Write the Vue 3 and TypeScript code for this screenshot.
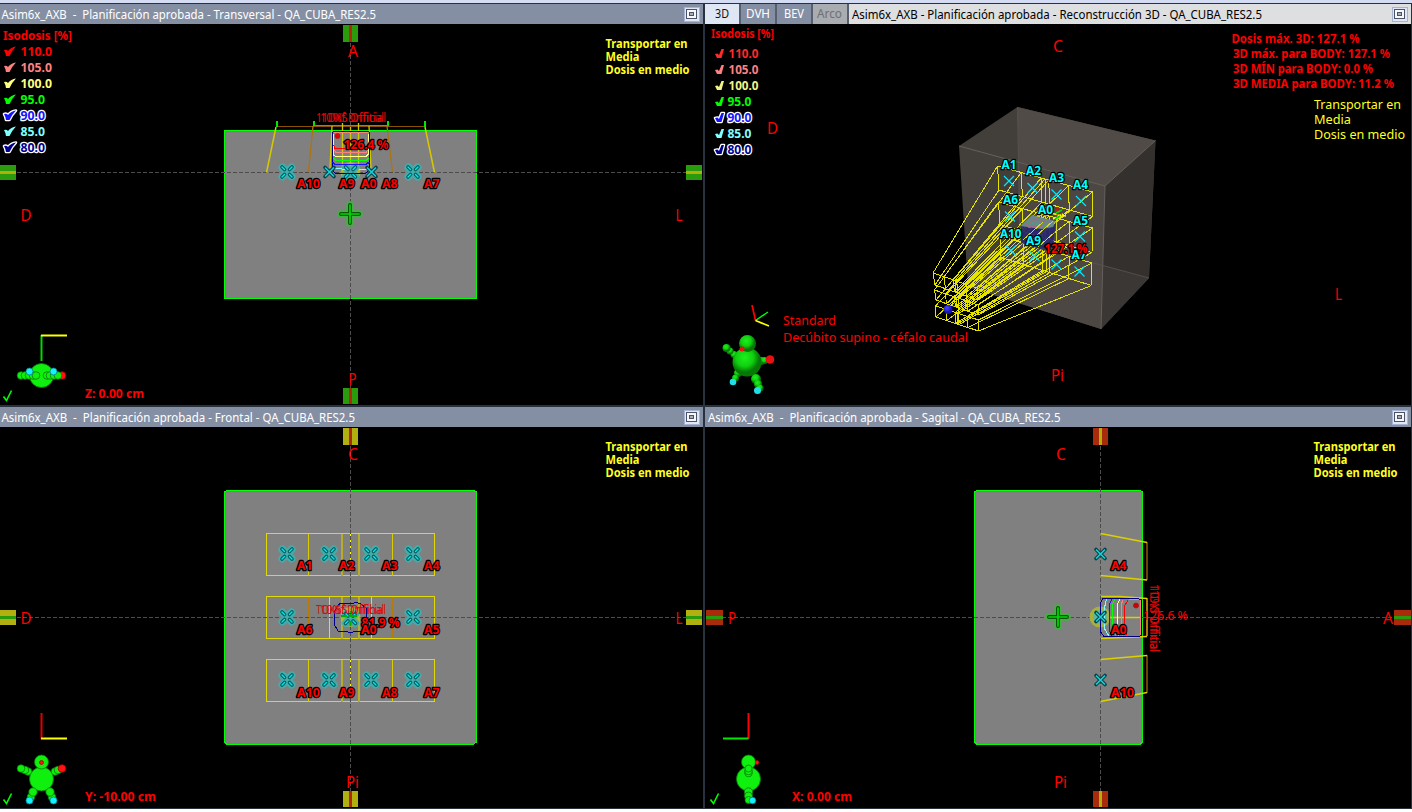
<script setup lang="ts">
interface Label {
  t: string
  x: number
  y: number
  w: number
  s?: number
  c?: string
  kind?: 'bold' | 'plain' | 'outlined' | 'halo'
}
type Pt = [number, number]

const RED = '#ff0000'
const YELLOW = '#ffff20'

const isoLevels = [
  { v: '110.0', c: '#ff0000', c3: '#ff2a2a', halo: false },
  { v: '105.0', c: '#ff8080', c3: '#ff8080', halo: false },
  { v: '100.0', c: '#ffff80', c3: '#f4f484', halo: false },
  { v: '95.0', c: '#00ff00', c3: '#00ff00', halo: false },
  { v: '90.0', c: '#1414ff', c3: '#1414ff', halo: true },
  { v: '85.0', c: '#80ffff', c3: '#80ffff', halo: false },
  { v: '80.0', c: '#000090', c3: '#000090', halo: true },
]

const transport = (x: number, y: number): Label[] => [
  { t: 'Transportar en', x, y, w: 82, c: YELLOW, s: 11.5 },
  { t: 'Media', x, y: y + 13, w: 34, c: YELLOW, s: 11.5 },
  { t: 'Dosis en medio', x, y: y + 26, w: 84, c: YELLOW, s: 11.5 },
]
const axis = (t: string, x: number, y: number, w = 10): Label => ({ t, x, y, w, s: 16, kind: 'plain' })
const field = (t: string, x: number, y: number): Label => ({
  t, x, y, w: t.length > 2 ? 23 : 15.5, s: 12.5, kind: 'outlined',
})

const transversal: Label[] = [
  { t: 'Isodosis [%]', x: 3, y: 40, w: 69, s: 12 },
  ...transport(605.5, 48),
  axis('A', 348, 57), axis('P', 348.5, 385, 8), axis('D', 20.5, 221, 11), axis('L', 675.5, 221, 7),
  { t: 'Z: 0.00 cm', x: 85, y: 398, w: 59, s: 12.5 },
  { t: '126.4 %', x: 343.5, y: 149, w: 45, s: 12, kind: 'outlined' },
  field('A10', 297, 188), field('A9', 339, 188), field('A0', 361, 188), field('A8', 382, 188), field('A7', 424, 188),
]
const frontal: Label[] = [
  ...transport(605.5, 451),
  axis('C', 348, 460), axis('Pi', 346, 788, 13), axis('D', 20.5, 624, 11), axis('L', 675.5, 624, 7),
  { t: 'Y: -10.00 cm', x: 85, y: 801, w: 71, s: 12.5 },
  field('A1', 297, 570), field('A2', 339, 570), field('A3', 382, 570), field('A4', 424, 570),
  field('A6', 297, 634), field('A5', 424, 634),
  { t: '81.9 %', x: 361.5, y: 627, w: 38, s: 12, kind: 'outlined' },
  field('A0', 361, 634),
  field('A10', 297, 697), field('A9', 339, 697), field('A8', 382, 697), field('A7', 424, 697),
]
const sagital: Label[] = [
  ...transport(1313.5, 451),
  axis('C', 1056, 460), axis('Pi', 1054, 788, 13), axis('P', 728, 624, 8), axis('A', 1383, 624),
  { t: 'X: 0.00 cm', x: 792, y: 801, w: 60, s: 12.5 },
  field('A4', 1111, 570), field('A0', 1111, 634), field('A10', 1111, 697),
]
const view3d: Label[] = [
  { t: 'Isodosis [%]', x: 711, y: 38, w: 63, s: 12 },
  axis('C', 1053, 52), axis('D', 767, 134, 11), axis('L', 1335, 300, 7), axis('Pi', 1051, 381, 13),
  { t: 'Dosis máx. 3D: 127.1 %', x: 1231.5, y: 43, w: 128, s: 12 },
  { t: '3D máx. para BODY: 127.1 %', x: 1233, y: 58, w: 157, s: 12 },
  { t: '3D MÍN para BODY: 0.0 %', x: 1233, y: 73, w: 140, s: 12 },
  { t: '3D MEDIA para BODY: 11.2 %', x: 1233, y: 88, w: 161, s: 12 },
  { t: 'Transportar en', x: 1314, y: 109, w: 87, s: 13, c: YELLOW, kind: 'plain' },
  { t: 'Media', x: 1314, y: 124, w: 37, s: 13, c: YELLOW, kind: 'plain' },
  { t: 'Dosis en medio', x: 1314, y: 139, w: 91, s: 13, c: YELLOW, kind: 'plain' },
  { t: 'Standard', x: 783, y: 325, w: 53, s: 13, kind: 'plain' },
  { t: 'Decúbito supino - céfalo caudal', x: 783, y: 342, w: 185, s: 13, kind: 'plain' },
]
const fields3d: Label[] = (
  [['A1', 1001.5, 169], ['A2', 1026, 175], ['A3', 1049, 182], ['A4', 1073, 189], ['A6', 1003, 204],
   ['A0', 1038, 214], ['A5', 1073, 225], ['A10', 1000, 238], ['A9', 1026, 245], ['A7', 1071.5, 259]] as [string, number, number][]
).map(([t, x, y]) => ({ t, x, y, w: t.length > 2 ? 21.5 : 15, s: 12.5, c: '#00ffff', kind: 'outlined' }))

const crosses3d: Pt[] = [
  [1009, 181], [1032.5, 188], [1056.5, 194.5], [1081, 201], [1010, 216.5], [1080, 236.5],
  [1011, 250.5], [1034.5, 256], [1056.5, 264.5], [1079.5, 271.5],
]

/* Each row of fields: corners at the phantom plane, then at the source plane (tl, tr, br, bl). */
const beamRows: { near: Pt[]; far: Pt[] }[] = [
  { near: [[997.5, 166], [1092.5, 192], [1092.5, 216.5], [999, 190]], far: [[933, 273], [977, 288], [977, 300], [935, 285]] },
  { near: [[998.5, 202], [1092.5, 228], [1092, 252.5], [1000, 224.5]], far: [[934.5, 290], [978, 305], [978, 315], [936, 300]] },
  { near: [[1000.5, 236], [1092, 263], [1091.5, 285.5], [1001, 257.5]], far: [[935.5, 306], [978.5, 320], [978.5, 331], [936, 317]] },
]
const stops = [0, 0.25, 0.46, 0.5, 0.54, 0.75, 1]
const mix = (a: Pt, b: Pt, k: number): Pt => [a[0] + (b[0] - a[0]) * k, a[1] + (b[1] - a[1]) * k]
const seg = (a: Pt, b: Pt) => `M${a[0]} ${a[1]}L${b[0]} ${b[1]}`
const beamPath = beamRows
  .map(({ near, far }) =>
    [near, far]
      .map((q) => seg(q[0], q[1]) + seg(q[3], q[2]) + stops.map((k) => seg(mix(q[0], q[1], k), mix(q[3], q[2], k))).join(''))
      .join('') +
    stops
      .map((k) => seg(mix(near[0], near[1], k), mix(far[0], far[1], k)) + seg(mix(near[3], near[2], k), mix(far[3], far[2], k)))
      .join(''),
  )
  .join('')

const frontalPetals: Pt[] = [
  [287, 554], [329, 554], [371, 554], [413, 554],
  [287, 617], [413, 617],
  [287, 680], [329, 680], [371, 680], [413, 680],
]
const tabs = [
  { t: '3D', w: 14, x: 10, cls: 'active' },
  { t: 'DVH', w: 24, x: 5, cls: '' },
  { t: 'BEV', w: 20, x: 7, cls: '' },
  { t: 'Arco', w: 25, x: 4, cls: 'off' },
]
const panes = [
  { id: 't', title: 'Asim6x_AXB\u00a0 -\u00a0 Planificación aprobada - Transversal - QA_CUBA_RES2.5', x: 1.5, w: 374.5, box: '0 24 703 381', labels: transversal },
  { id: 'v', title: 'Asim6x_AXB - Planificación aprobada - Reconstrucción 3D - QA_CUBA_RES2.5', x: 3, w: 410, box: '705 24 706 381', labels: view3d },
  { id: 'f', title: 'Asim6x_AXB\u00a0 -\u00a0 Planificación aprobada - Frontal - QA_CUBA_RES2.5', x: 1.5, w: 353.5, box: '0 427 703 381', labels: frontal },
  { id: 's', title: 'Asim6x_AXB\u00a0 -\u00a0 Planificación aprobada - Sagital - QA_CUBA_RES2.5', x: 3, w: 352.5, box: '705 427 706 381', labels: sagital },
]
</script>

<template>
  <div class="app">
    <svg class="defs" width="0" height="0">
      <defs>
        <g id="petals">
          <path d="M-4.5-4.5L4.5 4.5M4.5-4.5L-4.5 4.5" stroke="#45abab" stroke-width="8" stroke-linecap="round" />
          <path d="M-5-5L-2.5-2.5M5-5L2.5-2.5M-5 5L-2.5 2.5M5 5L2.5 2.5" stroke="#075c5c" stroke-width="3.6" stroke-linecap="round" />
          <path d="M-5-5L-2.5-2.5M5-5L2.5-2.5M-5 5L-2.5 2.5M5 5L2.5 2.5" stroke="#00e8ee" stroke-width="1.4" stroke-linecap="round" />
        </g>
        <g id="cross">
          <path d="M-4.5-4.5L4.5 4.5M4.5-4.5L-4.5 4.5" stroke="#033f46" stroke-width="3.6" stroke-linecap="round" />
          <path d="M-4.5-4.5L4.5 4.5M4.5-4.5L-4.5 4.5" stroke="#14d4da" stroke-width="1.6" />
        </g>
        <g id="plus">
          <path d="M-9 0H9M0-9V9" stroke="#42b142" stroke-width="7.5" stroke-linecap="round" />
          <path d="M-9 0H9M0-9V9" stroke="#0a560a" stroke-width="4" stroke-linecap="round" />
          <path d="M-9 0H9M0-9V9" stroke="#00d800" stroke-width="1.7" stroke-linecap="round" />
        </g>
        <path id="tick" d="M.5 6L3.5 10L8.500 0" fill="none" stroke="#00ff00" stroke-width="1.6" />
        <radialGradient id="ball" cx="42%" cy="35%"><stop offset="0" stop-color="#1cf01c" /><stop offset=".6" stop-color="#0fd00f" /><stop offset="1" stop-color="#067806" /></radialGradient>
        <radialGradient id="blueball" cx="38%" cy="32%"><stop offset="0" stop-color="#4a4aff" /><stop offset="1" stop-color="#1515b0" /></radialGradient>
      </defs>
    </svg>

    <div class="workspace">
      <section v-for="p in panes" :key="p.id" class="pane">
        <header class="bar">
          <nav v-if="p.id === 'v'" class="tabs">
            <svg v-for="tab in tabs" :key="tab.t" class="tab" :class="tab.cls" width="34" height="20">
              <text :x="tab.x" y="14" :textLength="tab.w" lengthAdjust="spacingAndGlyphs">{{ tab.t }}</text>
            </svg>
          </nav>
          <div class="caption" :class="{ light: p.id === 'v' }">
            <svg class="title" :width="p.w + 12" height="20">
              <text :x="p.x" y="15" :textLength="p.w" lengthAdjust="spacingAndGlyphs">{{ p.title }}</text>
            </svg>
            <svg class="max" width="16" height="15" viewBox="0 0 16 15" shape-rendering="crispEdges">
              <rect width="16" height="15" fill="#a5b4d2" /><rect x="1" y="1" width="14" height="13" fill="#dfe7f6" />
              <rect x="2.5" y="2.5" width="10" height="9" fill="#f8f8fc" stroke="#4c5268" /><rect x="5.5" y="5.5" width="4" height="3" fill="#a6acb8" stroke="#4c5268" />
            </svg>
          </div>
        </header>

        <svg class="viewport" :viewBox="p.box">
          <g v-if="p.id === 't'" class="art">
            <rect x="224.5" y="130.5" width="252" height="168" fill="#808080" stroke="#00ff00" class="crisp" />
            <path class="guide" d="M350.5 43V388M17 172.5H686" />
            <g class="crisp">
              <path d="M343 25h15v17h-15zM343 388h15v16h-15zM0 165h16v15H0zM686 165h16v15h-16z" fill="#299b0c" />
              <path d="M349 25h3v17h-3zM349 388h3v16h-3z" fill="#b0280e" /><path d="M0 171h16v3H0zM686 171h16v3h-16z" fill="#b0b008" />
              <path d="M276 126.5H425" stroke="#8a4f00" />
              <path d="M313 125.5H387" stroke="#00d800" />
              <path d="M313.500 121V126M387.500 121V126M276.500 121V127M425 121V127" stroke="#00e800" stroke-width="2" />
            </g>
            <path d="M276 127L266.5 172.5M425 127L434.5 172.5" stroke="#d6c800" stroke-width="1.5" />
            <path d="M313 126L308.500 172M387 126L392.500 172" stroke="#ab7410" stroke-width="1.3" />
            <path d="M332 126L330 168M369 126L371 168M342.500 123V172M358.500 123V172M350.500 127V172" stroke="#d2c800" stroke-width="1.3" />
            <circle cx="350.500" cy="172" r="10" fill="#b2bf35" opacity=".8" />
            <use href="#petals" x="350.500" y="172" />
            <g class="crisp iso">
              <path d="M332.500 133V168Q333 173 337 173.500H364Q368 173 369.500 168V133Q369 131 367 131.500H335Q333 131 332.500 133Z" stroke="#000080" />
              <path d="M332.500 162L335 164.500H366L369.500 162" stroke="#1414ff" stroke-width="1.500" /><path d="M334 168.500H341L345 170M359 169.500H368" stroke="#80ffff" />
              <path d="M333.500 134V155L336 156.500H366L368.500 154V134" stroke="#ffff80" />
              <path d="M334 132.500H368M334 150L336 152.500H366L368 150" stroke="#ff8080" /><path d="M334 158L336 160.500H366L368 158" stroke="#00ff00" stroke-width="1.500" />
              <path d="M333.500 145L335 148.500H345" stroke="#ff0000" />
            </g>
            <circle cx="337.500" cy="136" r="2.500" fill="#e00000" stroke="#a22" />
            <use href="#petals" x="287" y="172" /><use href="#petals" x="413" y="172" /><use href="#cross" x="329.500" y="172" /><use href="#cross" x="371.500" y="172" />
            <use href="#plus" x="350" y="214" />
            <g class="stack"><text x="316" y="122" textLength="68" lengthAdjust="spacingAndGlyphs">11DXf Drifitial</text><text x="320" y="122" textLength="66" lengthAdjust="spacingAndGlyphs">10%S Official</text></g>
            <path d="M41.500 335V361" stroke="#00d800" stroke-width="2" /><path d="M41 335.500H67" stroke="#ffff00" stroke-width="2" />
            <g class="doll">
              <circle cx="62" cy="375.500" r="3.800" class="red" /><circle cx="41.500" cy="375.500" r="12" />
              <circle v-for="x in [21, 25, 29, 33, 36, 47, 50, 54, 58]" :key="x" :cx="x" cy="375.500" r="3.800" />
              <circle cx="29.500" cy="371.500" r="3.500" class="cyan" /><circle cx="53.500" cy="371.500" r="3.500" class="cyan" />
            </g>
            <use href="#tick" x="3" y="390.500" />
          </g>

          <g v-else-if="p.id === 'v'" class="art">
            <path d="M959 146L1017.500 107L1155.500 140.500L1149 278L1101 329L968 287Z" fill="#423f3b" />
            <path d="M1017.500 107L1155.500 140.500L1105 186L1019 162Z" fill="#504b47" />
            <path d="M1018 162L1105 186L1101 329L968 287L1020 243Z" fill="#4c4743" />
            <path d="M1105 186L1155.500 140.500L1149 278L1101 329Z" fill="#33302e" />
            <path d="M1103 265L1149 278L1101 329Z" fill="#3a3734" />
            <path d="M959 146L1105 186L1155.500 140.500M1105 186L1101 329" stroke="#65605b" />
            <path d="M1017.500 107L1020 243L1149 278M1020 243L968 287" stroke="#5b5651" stroke-width=".8" />
            <path :d="beamPath" stroke="#e4e400" class="crisp" />
            <path d="M1021 223L1054 227L1056 220L1053 246L1046 251L1021 243Z" fill="#26266e" opacity=".93" />
            <path d="M1020 226L1032 215L1055 221L1053 227L1042 229Z" fill="#68878c" /><path d="M1025 225L1035 219L1050 222M1028 227L1047 226" stroke="#9a6f7d" stroke-dasharray="3 1" stroke-width="2" /><path d="M1028 222L1048 227" stroke="#2cba5a" stroke-dasharray="2 2" />
            <path d="M1023 240L1043 222M1027 244L1053 221M1038 247L1054 233M1056.500 218V242" stroke="#d8d820" class="crisp" />
            <path d="M1057.500 207V216" stroke="#ff0000" stroke-width="2" /><path d="M1048 212L1058 215L1066 216M1053 219L1063 214" stroke="#ffff00" stroke-width="1.500" stroke-dasharray="4 1" /><path d="M1056 213L1062 210M1055 219L1060 216" stroke="#00e000" stroke-width="1.500" />
            <path v-for="(q, i) in crosses3d" :key="i" :transform="`translate(${q[0]} ${q[1]})`" d="M-5-5L5 5M5-5L-5 5" stroke="#00e8ff" stroke-width="1.2" />
            <circle cx="948" cy="309.500" r="4.500" fill="url(#blueball)" /><path d="M952 307L955 305" stroke="#2020a0" />
            <text v-for="l in fields3d" :key="l.t" class="label outlined" :x="l.x" :y="l.y" :textLength="l.w" lengthAdjust="spacingAndGlyphs" :font-size="l.s" :fill="l.c">{{ l.t }}</text>
            <text class="label outlined" x="1044.500" y="253" textLength="43" lengthAdjust="spacingAndGlyphs" font-size="12" fill="#f00">127.1 %</text>
            <path d="M752 305L755.500 320.500" stroke="#ff0000" stroke-width="1.700" /><path d="M755.500 320.500L768 312" stroke="#00ff00" stroke-width="1.400" /><path d="M755.500 320.500L769 326" stroke="#ffff00" stroke-width="1.700" />
            <g class="ball">
              <circle cx="734" cy="354.500" r="3.500" /><circle cx="730" cy="351" r="3.500" /><circle cx="726.500" cy="348" r="4" />
              <circle cx="738" cy="373" r="4" /><circle cx="735.500" cy="378" r="3.500" /><circle cx="761" cy="361" r="4" /><circle cx="764.500" cy="360.500" r="3.500" />
              <circle cx="747" cy="362" r="14.500" /><circle cx="747.500" cy="343.500" r="8.500" /><circle cx="756" cy="379" r="5" /><circle cx="758" cy="384" r="4" /><circle cx="760" cy="388" r="3.500" />
              <circle cx="742" cy="349" r="2.500" class="red" /><circle cx="770" cy="359.500" r="4.300" class="red" /><circle cx="733" cy="382" r="3.300" class="cyan" /><circle cx="757.500" cy="390.500" r="3.500" class="cyan" />
            </g>
          </g>

          <g v-else-if="p.id === 'f'" class="art">
            <path d="M227 490.500H473.500L476.500 492V742L473.500 744.500H227L224.500 742V492Z" fill="#808080" stroke="#00ff00" class="crisp" />
            <g class="crisp">
              <path d="M343 428h15v17h-15zM343 791h15v16h-15zM0 610h16v15H0zM686 610h16v15h-16z" fill="#b0b010" />
              <path d="M349 428h3v17h-3zM349 791h3v16h-3z" fill="#b0280e" /><path d="M0 616h16v3H0zM686 616h16v3h-16z" fill="#299b0c" />
              <g v-for="y in [533.500, 596.500, 659.500]" :key="y">
                <rect x="266.500" :y="y" width="168" height="42" stroke="#e0d800" />
                <path :d="`M342 ${y}V${y + 42}M359 ${y}V${y + 42}`" stroke="#b6ad28" stroke-width="2" />
                <path v-if="y !== 596.500" :d="`M308.500 ${y}V${y + 42}M392.500 ${y}V${y + 42}`" stroke="#d8cc00" />
                <path v-else d="M308.500 597V638M392.500 597V638" stroke="#b67a08" />
              </g>
              <path d="M329.500 597V638M371.500 597V638" stroke="#e8e000" />
              <path d="M350.500 534V575M350.500 660V701" stroke="#ffff00" />
            </g>
            <path class="guide" d="M350.500 446V791M17 617.500H686" />
            <use v-for="(q, i) in frontalPetals" :key="i" href="#petals" :x="q[0]" :y="q[1]" />
            <circle cx="350.500" cy="617" r="10" fill="#b2bf35" opacity=".8" /><use href="#petals" x="350.500" y="618.500" />
            <path d="M341 616H361M350.500 611V626" stroke="#00b000" stroke-width="2" stroke-dasharray="6 4" />
            <path class="crisp" d="M337 607L340 603.500H352L356 602.500L361 604L366 608V628L361 631.500H355L351 632.500L345 631.500L338 631L334.500 625V612Z" stroke="#000090" />
            <g class="stack"><text x="316" y="614" textLength="68" lengthAdjust="spacingAndGlyphs">TOKSf Dnifihal</text><text x="320" y="614" textLength="66" lengthAdjust="spacingAndGlyphs">10%S Official</text></g>
            <path d="M41.500 713V739" stroke="#e00000" stroke-width="2" /><path d="M41 738.500H67" stroke="#ffff00" stroke-width="2" />
            <g class="doll">
              <circle cx="28" cy="771.500" r="3.800" /><circle cx="25" cy="770" r="3.800" /><circle cx="21" cy="768.500" r="3.800" /><circle cx="55" cy="771.500" r="3.800" /><circle cx="58" cy="770" r="3.800" />
              <circle cx="41.500" cy="779" r="12" /><circle cx="41.500" cy="762" r="7" /><circle cx="41.500" cy="762.500" r="2" class="red" />
              <circle cx="31" cy="797" r="3.800" /><circle cx="52" cy="797" r="3.800" /><circle cx="33" cy="792" r="4.200" /><circle cx="50" cy="792" r="4.200" />
              <circle cx="62" cy="768.500" r="3.800" class="red" /><circle cx="29.500" cy="800.500" r="3.500" class="cyan" /><circle cx="53.500" cy="800.500" r="3.500" class="cyan" />
            </g>
            <use href="#tick" x="3" y="793.500" />
          </g>

          <g v-else class="art">
            <path d="M977 490.500H1140L1142.500 492V742L1140 744.500H977L974.500 742V492Z" fill="#808080" stroke="#00ff00" class="crisp" />
            <path class="guide" d="M1100.500 446V791M722 617.500H1394" />
            <g class="crisp">
              <path d="M1093 428h15v17h-15zM1093 791h15v16h-15zM706 610h17v15h-17zM1394 610h17v15h-17z" fill="#a82c0c" />
              <path d="M1099 428h3v17h-3zM1099 791h3v16h-3z" fill="#b0b008" /><path d="M706 616h17v3h-17zM1394 616h17v3h-17z" fill="#299b0c" />
              <path d="M1147 542V580M1147 655V693" stroke="#6a4300" stroke-width="2" /><path d="M1147 598V636" stroke="#b67a08" stroke-width="2" />
            </g>
            <path d="M1100.500 533.500L1147 542.500M1100.500 575.500L1147 580M1101 596.500H1120L1147 598.500M1101 638.500L1147 636.500M1100.500 659.500L1147 655.500M1100.500 701.500L1147 692.500M1101 617.500H1142" stroke="#dcd000" stroke-width="1.400" />
            <circle cx="1100" cy="617" r="10.500" fill="#aab03c" /><circle cx="1100" cy="617" r="7" fill="#5bb8a0" />
            <g class="crisp iso">
              <path d="M1106.500 599L1104 610V628L1109 636" stroke="#80ffff" /><path d="M1112 599L1109 605V630L1112 636" stroke="#1414ff" /><path d="M1115 599L1112.500 604V630L1116 636" stroke="#00ff00" />
              <path d="M1120 599L1117 605V630L1119 636" stroke="#ffff80" /><path d="M1123 600L1121 605V630L1123 636M1129 599.500H1140V635" stroke="#ff8080" /><path d="M1128 600L1124.500 606V630L1127 635" stroke="#ff0000" />
              <path d="M1103 598.500H1138L1141.500 600V635L1139 636.500H1104L1100.500 632V603Z" stroke="#000080" />
            </g>
            <circle cx="1136" cy="605.500" r="2.500" fill="#d00000" stroke="#922" />
            <use href="#cross" x="1100.500" y="554" /><use href="#cross" x="1100.500" y="617" /><use href="#cross" x="1100.500" y="680" /><use href="#plus" x="1058" y="617" />
            <text class="label" x="1143" y="619.500" textLength="45" font-size="12.500" fill="#f00">126.6 %</text>
            <g class="stack" transform="translate(1150 584) rotate(90)"><text x="0" y="0" textLength="68" lengthAdjust="spacingAndGlyphs">11DXf Drifitial</text><text x="2" y="0" textLength="66" lengthAdjust="spacingAndGlyphs">10%S Official</text></g>
            <path d="M748.500 713V739" stroke="#ff0000" stroke-width="2" /><path d="M723 738.500H748.500" stroke="#00e800" stroke-width="2" />
            <g class="doll">
              <circle cx="757" cy="762.500" r="2" class="red" /><circle cx="748.500" cy="779" r="12" /><circle cx="748.500" cy="762" r="7" />
              <circle cx="748.500" cy="773" r="3.800" /><circle cx="748.500" cy="771" r="3.800" /><circle cx="748.500" cy="768.500" r="3.500" />
              <circle cx="748.500" cy="792" r="4.200" /><circle cx="748.500" cy="796" r="4" /><circle cx="748.500" cy="800" r="3.500" /><circle cx="752.500" cy="800.500" r="3.300" class="cyan" />
            </g>
            <use href="#tick" x="710" y="793.500" />
          </g>

          <g v-if="p.id === 't' || p.id === 'v'">
            <g v-for="(l, i) in isoLevels" :key="l.v" :fill="p.id === 't' ? l.c : l.c3" :class="{ haloed: l.halo }">
              <path v-if="p.id === 't'" :transform="`translate(4 ${46.5 + i * 16})`" d="M0 3.500Q2.500 2.500 4 4.500Q7 .5 12 0Q7.500 4.500 5.500 9.500H2Q1.500 6 0 3.500Z" />
              <path v-else :transform="`translate(715 ${49 + i * 16})`" d="M0 5L2.500 4.500L4 6L6.500 0H9L6.500 9H2Z" />
              <text class="label bold" :x="p.id === 't' ? 20.5 : i < 3 ? 728.500 : 727.500" :y="(p.id === 't' ? 56 : 58) + i * 16" :textLength="p.id === 't' ? (i < 3 ? 31.500 : 24.500) : (i < 3 ? 30 : 24)" lengthAdjust="spacingAndGlyphs" font-size="12.500">{{ l.v }}</text>
            </g>
          </g>
          <text v-for="(l, i) in p.labels" :key="i" class="label" :class="l.kind ?? 'bold'" :x="l.x" :y="l.y" :textLength="l.w" lengthAdjust="spacingAndGlyphs" :font-size="l.s" :fill="l.c ?? RED">{{ l.t }}</text>
        </svg>
      </section>
    </div>
  </div>
</template>

<style>
body { margin: 0; background: #fff; overflow: hidden; }
</style>
<style scoped>
.app { width: 1412px; height: 812px; box-sizing: border-box; background: #fff; font-family: 'Noto Sans', 'Open Sans', sans-serif; }
.defs { position: absolute; }
.workspace { display: grid; grid-template-columns: 703px 706px; grid-template-rows: 401px 401px; column-gap: 2px; row-gap: 2px; border-top: 3px solid #d3dcf2; background: #28323f; padding: 1px 1px 1px 0; }
.pane { display: flex; flex-direction: column; min-width: 0; }
.bar { display: flex; height: 20px; }
.caption { flex: 1; display: flex; justify-content: space-between; align-items: center; background: #858fa3; color: #fff; padding-right: 3px; }
.caption.light { background: #dedfe0; color: #000; }
.title { overflow: visible; }
.title text, .tab text { fill: currentColor; font-size: 12px; }
.tabs { display: flex; gap: 2px; background: #555f6e; padding-right: 2px; }
.tab { background: #858fa3; color: #fff; }
.tab.active { background: #e0e7f4; color: #111; }
.tab.off { background: #a9acb0; color: #6e7072; }
.viewport { display: block; width: 100%; height: 381px; background: #000; }
.art { fill: none; }
.crisp { shape-rendering: crispEdges; }
.guide { stroke: #4c4c4c; stroke-dasharray: 4 2; shape-rendering: crispEdges; }
.label { white-space: pre; }
.bold, .outlined { font-weight: 700; }
.outlined { stroke: #000; stroke-width: 2.500px; paint-order: stroke; stroke-linejoin: round; }
.haloed { stroke: #fff; stroke-width: 2.600px; paint-order: stroke; stroke-linejoin: round; }
.haloed path, .haloed text { paint-order: stroke; }
.stack text { fill: #e00808; font-size: 12.5px; }
.doll circle { fill: #0ff00f; stroke: #077a07; stroke-width: .8; }
.doll .red { fill: #ff1414; stroke: #a00; }
.doll .cyan { fill: #14f0ff; stroke: #087f88; }
.ball circle { fill: url(#ball); }
.ball .red { fill: #e81010; }
.ball .cyan { fill: #1edfe6; }
</style>
